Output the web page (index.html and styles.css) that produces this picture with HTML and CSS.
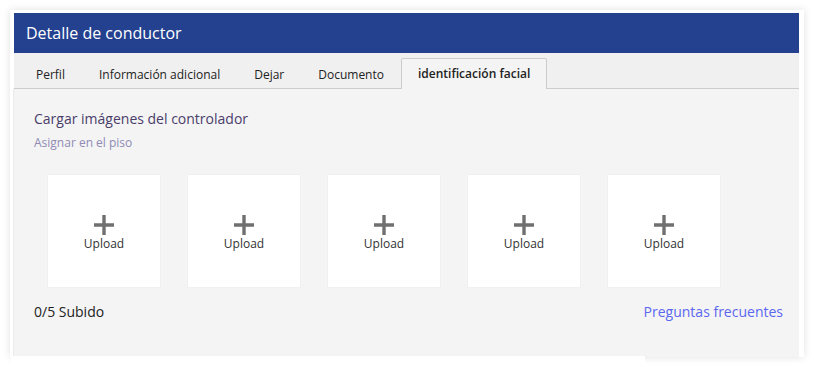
FILE: index.html
```html
<!DOCTYPE html>
<html lang="es">
<head>
<meta charset="utf-8">
<title>Detalle de conductor</title>
<link rel="stylesheet" href="styles.css">
</head>
<body>
<div class="card">
  <div class="header">Detalle de conductor</div>
  <div class="tabs">
    <div class="tab">Perfil</div>
    <div class="tab">Información adicional</div>
    <div class="tab">Dejar</div>
    <div class="tab">Documento</div>
    <div class="tab active">identificación facial</div>
  </div>
  <div class="body">
    <div class="title">Cargar imágenes del controlador</div>
    <div class="subtitle">Asignar en el piso</div>
    <div class="uploads">
      <div class="upload"><svg class="plus" viewBox="0 0 20 20"><path d="M10 0V20M0 10H20"/></svg><span>Upload</span></div>
      <div class="upload"><svg class="plus" viewBox="0 0 20 20"><path d="M10 0V20M0 10H20"/></svg><span>Upload</span></div>
      <div class="upload"><svg class="plus" viewBox="0 0 20 20"><path d="M10 0V20M0 10H20"/></svg><span>Upload</span></div>
      <div class="upload"><svg class="plus" viewBox="0 0 20 20"><path d="M10 0V20M0 10H20"/></svg><span>Upload</span></div>
      <div class="upload"><svg class="plus" viewBox="0 0 20 20"><path d="M10 0V20M0 10H20"/></svg><span>Upload</span></div>
    </div>
    <div class="footer">
      <span class="count">0/5 Subido</span>
      <a class="faq" href="#">Preguntas frecuentes</a>
    </div>
  </div>
</div>
<div class="under"></div>
</body>
</html>
```
FILE: styles.css
```css
html, body {
  margin: 0;
  padding: 0;
  background: #ffffff;
  font-family: "Open Sans", "Noto Sans", sans-serif;
}
.card {
  width: 785px;
  margin: 10px 0 0 10px;
  padding: 3px 5px 0 4px;
  background: #ffffff;
  box-shadow: 0 0 8px rgba(0, 0, 0, 0.12);
  position: relative;
  z-index: 1;
}
.header {
  height: 40px;
  line-height: 40px;
  background: #23418f;
  color: #ffffff;
  font-size: 16px;
  padding-left: 12px;
}
.tabs {
  display: flex;
  align-items: flex-end;
  height: 36px;
  padding-left: 5px;
  background: #f0f0f0;
  border-bottom: 1px solid #cccccc;
  box-sizing: border-box;
}
.tab {
  height: 29px;
  line-height: 30px;
  padding: 0 16px;
  border: 1px solid transparent;
  border-bottom: none;
  font-size: 12px;
  color: #222222;
  margin-bottom: -1px;
}
.tab.active {
  height: 30px;
  background: #f4f4f4;
  border-color: #cccccc;
  font-weight: 600;
  border-radius: 2px 2px 0 0;
}
.body {
  background: #f4f4f4;
  padding: 20px 16px 34px 20px;
  border-left: 1px solid #ebebeb;
  margin-left: -1px;
}
.title {
  font-size: 14px;
  line-height: 20px;
  color: #4a3d6a;
}
.subtitle {
  font-size: 12px;
  line-height: 20px;
  margin-top: 4px;
  color: #8f8bb3;
}
.uploads {
  display: flex;
  gap: 26px;
  margin: 21px 0 0 13px;
}
.upload {
  width: 114px;
  height: 114px;
  padding-top: 7px;
  background: #ffffff;
  border: 1px solid #f0f0f0;
  box-sizing: border-box;
  display: flex;
  flex-direction: column;
  align-items: center;
  justify-content: center;
  font-size: 12px;
  color: #333333;
}
.plus {
  width: 20px;
  height: 20px;
  margin-top: -2px;
}
.plus path {
  stroke: #707070;
  stroke-width: 3.4;
  fill: none;
}
.upload span {
  line-height: 18px;
  margin-top: 0;
}
.footer {
  display: flex;
  justify-content: space-between;
  align-items: center;
  margin-top: 13px;
  line-height: 22px;
}
.count {
  font-size: 14px;
  color: #222222;
}
.faq {
  font-size: 14px;
  color: #5b67f0;
  text-decoration: none;
}
.under {
  width: 634px;
  height: 14px;
  margin-left: 11px;
  background: #ffffff;
  position: relative;
  z-index: 2;
  margin-top: -1px;
}
```
